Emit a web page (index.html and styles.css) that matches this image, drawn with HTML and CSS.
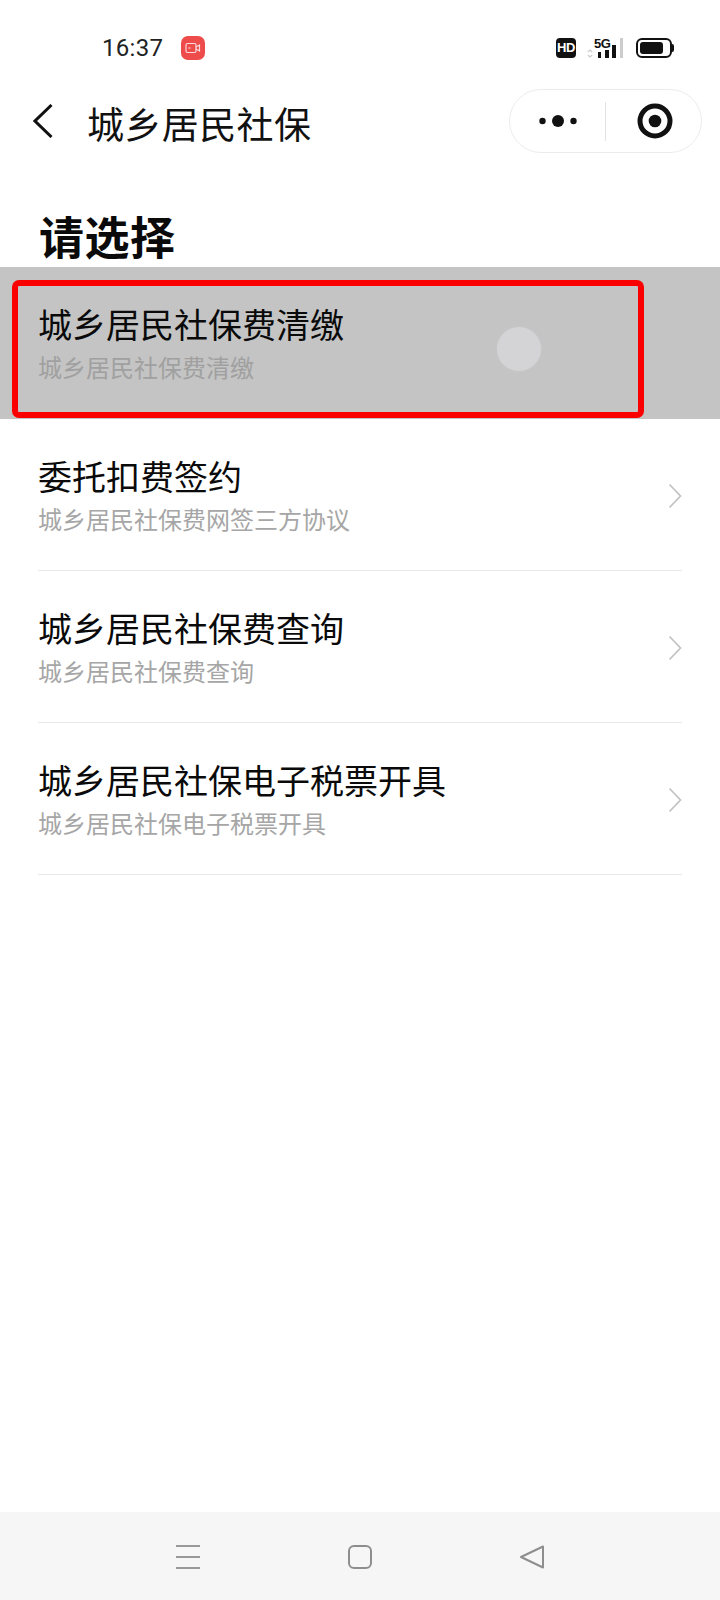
FILE: index.html
```html
<!DOCTYPE html>
<html lang="zh-CN">

<head>
    <meta charset="UTF-8">
    <meta name="viewport" content="width=device-width, initial-scale=1.0">
    <title>城乡居民社保</title>
    <link rel="stylesheet" href="styles.css">
</head>

<body>
    <div class="status-bar">
        <div class="status-left">
            <span class="time">16:37</span>
            <span class="rec-badge">
                <svg width="16" height="12" viewBox="0 0 16 12" fill="none" stroke="#fff" stroke-width="1.2" opacity="0.8">
                    <rect x="1" y="1.5" width="10" height="9" rx="1.5"/>
                    <path d="M11 5l3.5-2v6L11 7"/>
                    <path d="M3.5 6h2"/>
                </svg>
            </span>
        </div>
        <div class="status-right">
            <span class="hd-badge">HD</span>
            <span class="signal">
                <span class="signal-arrows">
                    <svg width="6" height="9" viewBox="0 0 6 9" fill="none" stroke="#ccc" stroke-width="1.2">
                        <path d="M.8 3L3 1 5.2 3M.8 6L3 8 5.2 6"/>
                    </svg>
                </span>
                <span class="signal-label">5G</span>
                <span class="bar bar-1"></span>
                <span class="bar bar-2"></span>
                <span class="bar bar-3"></span>
                <span class="bar bar-4"></span>
            </span>
            <span class="battery">
                <span class="battery-level"></span>
            </span>
            <span class="battery-tip"></span>
        </div>
    </div>

    <div class="nav-bar">
        <svg class="back-icon" width="20" height="34" viewBox="0 0 20 34" fill="none" stroke="#111" stroke-width="3">
            <path d="M18.5 1L2 17l16.5 16"/>
        </svg>
        <div class="nav-title">城乡居民社保</div>
        <div class="capsule">
            <div class="capsule-cell capsule-more">
                <svg width="38" height="12" viewBox="0 0 38 12" fill="#111">
                    <circle cx="3.5" cy="6" r="3.2"/>
                    <circle cx="19" cy="6" r="6"/>
                    <circle cx="34.5" cy="6" r="3.2"/>
                </svg>
            </div>
            <div class="capsule-line"></div>
            <div class="capsule-cell capsule-target">
                <svg width="36" height="36" viewBox="0 0 36 36">
                    <circle cx="18" cy="18" r="15" fill="none" stroke="#111" stroke-width="5"/>
                    <circle cx="18" cy="18" r="6.3" fill="#111"/>
                </svg>
            </div>
        </div>
    </div>

    <h1 class="page-title">请选择</h1>

    <div class="list">
        <div class="list-item active">
            <div class="item-text">
                <div class="item-name">城乡居民社保费清缴</div>
                <div class="item-desc">城乡居民社保费清缴</div>
            </div>
            <div class="red-box"></div>
            <div class="touch-dot"></div>
        </div>
        <div class="list-item">
            <div class="item-text">
                <div class="item-name">委托扣费签约</div>
                <div class="item-desc">城乡居民社保费网签三方协议</div>
            </div>
            <svg class="arrow" width="14" height="26" viewBox="0 0 14 26" fill="none" stroke="#c4c4c4" stroke-width="1.8">
                <path d="M1.5 1.5L12.5 13 1.5 24.5"/>
            </svg>
        </div>
        <div class="list-item">
            <div class="item-text">
                <div class="item-name">城乡居民社保费查询</div>
                <div class="item-desc">城乡居民社保费查询</div>
            </div>
            <svg class="arrow" width="14" height="26" viewBox="0 0 14 26" fill="none" stroke="#c4c4c4" stroke-width="1.8">
                <path d="M1.5 1.5L12.5 13 1.5 24.5"/>
            </svg>
        </div>
        <div class="list-item">
            <div class="item-text">
                <div class="item-name">城乡居民社保电子税票开具</div>
                <div class="item-desc">城乡居民社保电子税票开具</div>
            </div>
            <svg class="arrow" width="14" height="26" viewBox="0 0 14 26" fill="none" stroke="#c4c4c4" stroke-width="1.8">
                <path d="M1.5 1.5L12.5 13 1.5 24.5"/>
            </svg>
        </div>
    </div>

    <div class="system-nav">
        <svg width="26" height="26" viewBox="0 0 26 26" fill="none" stroke="#999" stroke-width="2">
            <path d="M1 2h24M1 13h24M1 24h24"/>
        </svg>
        <svg width="26" height="26" viewBox="0 0 26 26" fill="none" stroke="#8e8e8e" stroke-width="2">
            <rect x="2" y="2" width="22" height="22" rx="5"/>
        </svg>
        <svg width="26" height="26" viewBox="0 0 26 26" fill="none" stroke="#8e8e8e" stroke-width="2" stroke-linejoin="round">
            <path d="M24 2.5v21L2 13z"/>
        </svg>
    </div>
</body>

</html>
```

FILE: styles.css
```css
* {
    box-sizing: border-box;
}

body {
    margin: 0;
    width: 720px;
    height: 1600px;
    display: flex;
    flex-direction: column;
    background: #fff;
    color: #111;
    font-family: "Noto Sans CJK SC", "Noto Sans", sans-serif;
    overflow: hidden;
}

.status-bar {
    height: 88px;
    padding: 36px 46px 0 102px;
    display: flex;
    justify-content: space-between;
    align-items: flex-start;
}

.status-left {
    display: flex;
    align-items: center;
    gap: 18px;
}

.time {
    font-family: Roboto, sans-serif;
    font-size: 24px;
    line-height: 24px;
    letter-spacing: 0.3px;
    color: #222;
}

.rec-badge {
    width: 24px;
    height: 24px;
    border-radius: 7px;
    background: #ee4b4b;
    display: flex;
    align-items: center;
    justify-content: center;
}

.status-right {
    display: flex;
    align-items: flex-start;
    padding-top: 2px;
}

.hd-badge {
    width: 20px;
    height: 20px;
    border-radius: 4px;
    background: #111;
    color: #fff;
    font-family: "Liberation Sans", sans-serif;
    font-size: 13px;
    font-weight: bold;
    line-height: 20px;
    text-align: center;
    letter-spacing: -0.5px;
}

.signal {
    position: relative;
    width: 36px;
    height: 20px;
    margin-left: 11px;
    margin-right: 13px;
}

.signal-arrows {
    position: absolute;
    left: 0;
    top: 1px;
}

.signal-label {
    position: absolute;
    left: 7px;
    top: -1px;
    font-family: "Liberation Sans", sans-serif;
    font-size: 13px;
    font-weight: bold;
    line-height: 14px;
    letter-spacing: -0.5px;
    color: #111;
}

.bar {
    position: absolute;
    bottom: 0;
    width: 4px;
    background: #111;
}

.bar-1 {
    left: 11px;
    width: 3px;
    height: 6px;
}

.bar-2 {
    left: 18px;
    height: 8px;
}

.bar-3 {
    left: 25px;
    height: 13px;
}

.bar-4 {
    left: 33px;
    height: 20px;
    width: 3px;
    background: #ccc;
}

.battery {
    width: 36px;
    height: 20px;
    border: 2px solid #111;
    border-radius: 6px;
    padding: 2px;
}

.battery-level {
    display: block;
    width: 23px;
    height: 12px;
    background: #111;
    border-radius: 3px;
}

.battery-tip {
    width: 2px;
    height: 8px;
    margin-top: 6px;
    background: #111;
    border-radius: 0 2px 2px 0;
}

.nav-bar {
    height: 66px;
    display: flex;
    align-items: center;
    padding-left: 33px;
    padding-right: 18px;
}

.back-icon {
    flex: none;
}

.nav-title {
    margin-left: 34px;
    padding-top: 3px;
    font-size: 37px;
    line-height: 50px;
    letter-spacing: 0.4px;
    flex: 1;
}

.capsule {
    width: 193px;
    height: 64px;
    border: 1.5px solid #ececec;
    border-radius: 32px;
    display: flex;
    align-items: center;
}

.capsule-cell {
    display: flex;
    justify-content: center;
    align-items: center;
}

.capsule-more {
    width: 95px;
}

.capsule-target {
    flex: 1;
    padding-left: 2px;
}

.capsule-line {
    width: 1px;
    height: 39px;
    background: #e2e2e2;
}

.page-title {
    margin: 50px 0 0;
    padding-left: 39px;
    font-size: 45px;
    line-height: 63px;
    letter-spacing: 0.5px;
    font-weight: bold;
    height: 63px;
    color: #0a0a0a;
}

.list {
    flex: 1;
}

.list-item {
    position: relative;
    height: 152px;
    margin: 0 38px;
    border-bottom: 1px solid #e8e8e8;
    display: flex;
    align-items: flex-start;
    justify-content: space-between;
    padding-top: 34px;
}

.list-item.active {
    margin: 0;
    padding-left: 38px;
    padding-right: 38px;
    background: #c4c4c4;
    border-bottom: none;
}

.item-name {
    font-size: 34px;
    line-height: 46px;
    color: #0a0a0a;
}

.item-desc {
    font-size: 24px;
    line-height: 32px;
    margin-top: 4px;
    color: #a6a6a6;
}

.active .item-desc {
    color: #a0a0a0;
}

.arrow {
    margin-top: 30px;
}

.red-box {
    position: absolute;
    left: 12px;
    top: 13px;
    width: 632px;
    height: 138px;
    border: 6px solid #fa0000;
    border-radius: 7px;
}

.touch-dot {
    position: absolute;
    left: 497px;
    top: 60px;
    width: 44px;
    height: 44px;
    border-radius: 50%;
    background: #d4d4d6;
    box-shadow: 0 0 3px #cacaca;
}

.system-nav {
    height: 88px;
    background: #f6f6f6;
    padding: 32px 175px 0;
    display: flex;
    justify-content: space-between;
    align-items: flex-start;
}
```
